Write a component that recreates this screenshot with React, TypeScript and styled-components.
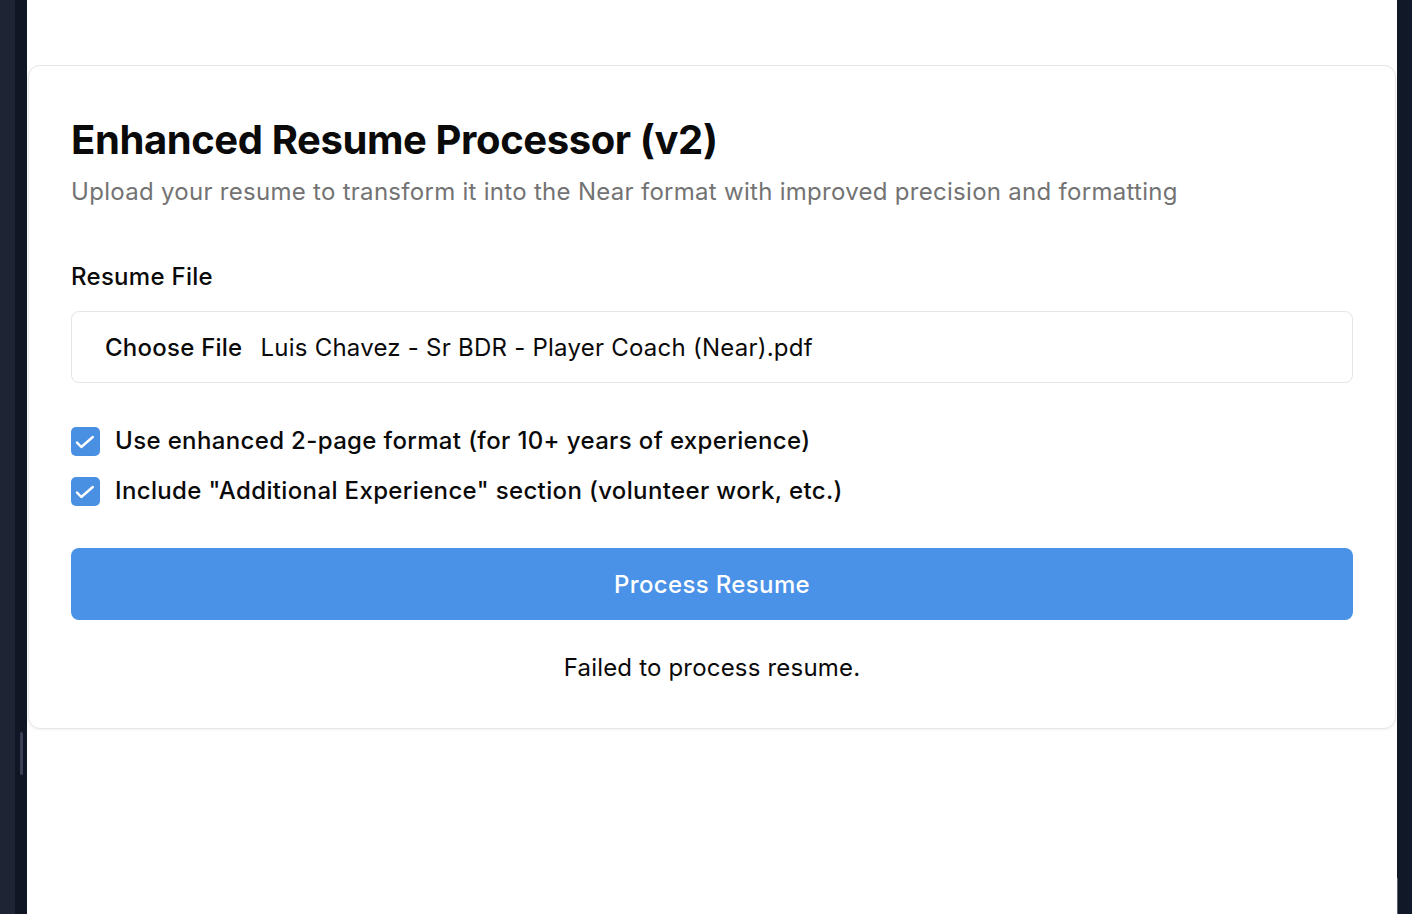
import styled, { createGlobalStyle } from 'styled-components';

const GlobalStyle = createGlobalStyle`
  html, body {
    margin: 0;
    padding: 0;
    background: #111827;
  }
  body {
    font-family: 'Inter', 'Noto Sans', sans-serif;
    -webkit-font-smoothing: antialiased;
  }
`;

const options = [
  { id: 'twoPage', label: 'Use enhanced 2-page format (for 10+ years of experience)' },
  { id: 'additional', label: 'Include "Additional Experience" section (volunteer work, etc.)' },
];

const CheckIcon = () => (
  <svg width="29" height="29" viewBox="0 0 29 29" fill="none">
    <path d="M6 15.6l4.3 4.4L21.8 10" stroke="#fff" strokeWidth="2.4" strokeLinecap="round" strokeLinejoin="round" />
  </svg>
);

const App = () => {
  return (
    <>
      <GlobalStyle />
      <S.Shell>
        <S.LeftRail />
        <S.Gutter>
          <S.ScrollThumb />
        </S.Gutter>
        <S.Main>
          <S.Card>
            <S.Title>Enhanced Resume Processor (v2)</S.Title>
            <S.Subtitle>
              Upload your resume to transform it into the Near format with improved precision and formatting
            </S.Subtitle>

            <S.Field>
              <S.Label>Resume File</S.Label>
              <S.FileInput>
                <S.ChooseButton>Choose File</S.ChooseButton>
                <S.FileName>Luis Chavez - Sr BDR - Player Coach (Near).pdf</S.FileName>
              </S.FileInput>
            </S.Field>

            <S.OptionList>
              {options.map((opt) => (
                <S.OptionRow key={opt.id}>
                  <S.CheckBox>
                    <CheckIcon />
                  </S.CheckBox>
                  <S.OptionText>{opt.label}</S.OptionText>
                </S.OptionRow>
              ))}
            </S.OptionList>

            <S.SubmitButton type="button">Process Resume</S.SubmitButton>
            <S.Status>Failed to process resume.</S.Status>
          </S.Card>
        </S.Main>
        <S.RightRail>
          <S.RightEdge />
        </S.RightRail>
      </S.Shell>
    </>
  );
};

export default App;

const S = {
  Shell: styled.div`
    display: flex;
    width: 100%;
    height: 914px;
    overflow: hidden;
  `,
  LeftRail: styled.div`
    width: 15px;
    flex-shrink: 0;
    background: #1e2434;
  `,
  Gutter: styled.div`
    position: relative;
    width: 12px;
    flex-shrink: 0;
    background: #101624;
  `,
  ScrollThumb: styled.div`
    position: absolute;
    left: 5px;
    top: 732px;
    width: 3px;
    height: 43px;
    border-radius: 2px;
    background: #3b3e55;
  `,
  Main: styled.main`
    flex: 1;
    background: #ffffff;
    padding: 65px 1px 0;
  `,
  RightRail: styled.div`
    position: relative;
    width: 15px;
    flex-shrink: 0;
    background: #111827;
  `,
  RightEdge: styled.div`
    position: absolute;
    left: 0;
    top: 878px;
    width: 1px;
    bottom: 0;
    background: #5b6070;
  `,
  Card: styled.section`
    border: 1px solid #e6e6e6;
    border-radius: 12px;
    background: #fff;
    box-shadow: 0 1px 3px rgba(0, 0, 0, 0.06);
    padding: 48px 42px 42px;
    display: flex;
    flex-direction: column;
  `,

  // Typography
  Title: styled.h1`
    margin: 0;
    color: #0a0a0a;
    font-size: 40px;
    font-weight: 700;
    line-height: 52px;
    letter-spacing: -0.01em;
  `,
  Subtitle: styled.p`
    margin: 8px 0 0;
    color: #737373;
    font-size: 24px;
    line-height: 36px;
    letter-spacing: 0.012em;
  `,
  Label: styled.label`
    color: #0a0a0a;
    font-size: 24px;
    font-weight: 500;
    line-height: 36px;
    letter-spacing: 0.012em;
  `,
  OptionText: styled.span`
    color: #0a0a0a;
    font-size: 24px;
    font-weight: 500;
    line-height: 36px;
    letter-spacing: 0.015em;
  `,
  Status: styled.p`
    margin: 30px 0 0;
    text-align: center;
    color: #0a0a0a;
    font-size: 24px;
    line-height: 36px;
    letter-spacing: 0.008em;
  `,

  // Elements
  Field: styled.div`
    display: flex;
    flex-direction: column;
    gap: 16px;
    margin-top: 49px;
  `,
  FileInput: styled.div`
    display: flex;
    align-items: center;
    height: 72px;
    box-sizing: border-box;
    border: 1px solid #e5e5e5;
    border-radius: 8px;
    padding: 0 33px;
    gap: 18px;
    font-size: 24px;
    color: #0a0a0a;
    letter-spacing: 0.01em;
  `,
  ChooseButton: styled.span`
    font-weight: 500;
  `,
  FileName: styled.span`
    font-weight: 400;
  `,
  OptionList: styled.div`
    display: flex;
    flex-direction: column;
    gap: 14px;
    margin-top: 40px;
  `,
  OptionRow: styled.div`
    display: flex;
    align-items: center;
    gap: 15px;
  `,
  CheckBox: styled.span`
    width: 29px;
    height: 29px;
    border-radius: 5px;
    background: #4a90e2;
    display: flex;
    align-items: center;
    justify-content: center;
    flex-shrink: 0;
  `,
  SubmitButton: styled.button`
    margin-top: 39px;
    height: 72px;
    border: none;
    border-radius: 8px;
    background: #4a92e8;
    color: #fff;
    font-family: inherit;
    font-size: 24px;
    font-weight: 500;
    letter-spacing: 0.015em;
    cursor: pointer;
  `,
};
